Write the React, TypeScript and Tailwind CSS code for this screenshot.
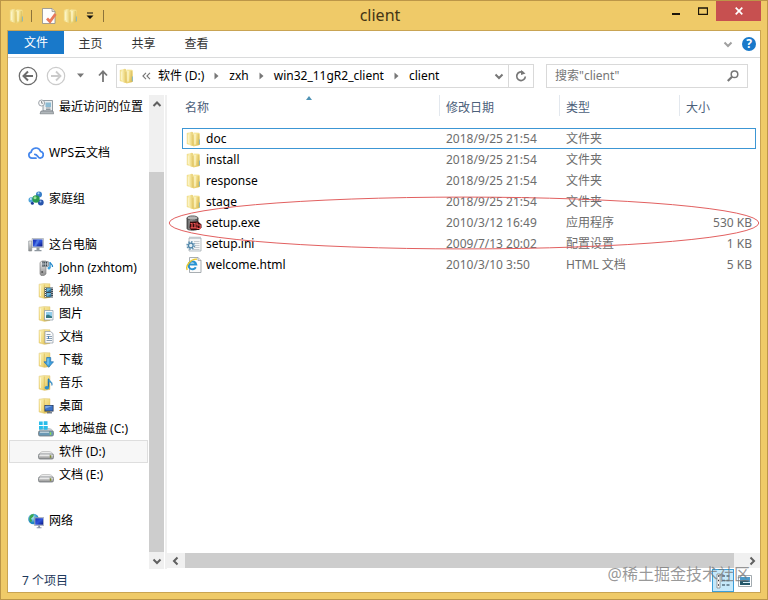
import React from "react";

type IconProps = { className?: string };

function Icon({ children, className = "" }: { children: React.ReactNode; className?: string }) {
  return (
    <svg viewBox="0 0 16 16" aria-hidden="true" className={`h-4 w-4 shrink-0 ${className}`}>
      {children}
    </svg>
  );
}

function Gradients() {
  return (
    <svg width="0" height="0" className="absolute" aria-hidden="true">
      <defs>
        <linearGradient id="folderBack" x1="0" x2="1">
          <stop offset="0" stopColor="#eed882" />
          <stop offset="0.4" stopColor="#f9eeb0" />
          <stop offset="1" stopColor="#e4c763" />
        </linearGradient>
        <linearGradient id="folderFront" x1="0" x2="1" y2="1">
          <stop offset="0" stopColor="#faf0b4" />
          <stop offset="0.5" stopColor="#f1dc84" />
          <stop offset="1" stopColor="#dcbb4e" />
        </linearGradient>
        <linearGradient id="metal" x1="0" x2="0" y2="1">
          <stop offset="0" stopColor="#f2f2f2" />
          <stop offset="1" stopColor="#8c8c8c" />
        </linearGradient>
        <linearGradient id="screen" x1="0" x2="1" y2="1">
          <stop offset="0" stopColor="#1a2fb0" />
          <stop offset="0.5" stopColor="#2f55dc" />
          <stop offset="1" stopColor="#0a1680" />
        </linearGradient>
        <radialGradient id="globe" cx="0.4" cy="0.35">
          <stop offset="0" stopColor="#b8ecf5" />
          <stop offset="1" stopColor="#1c86c4" />
        </radialGradient>
        <linearGradient id="cylinder" x1="0" x2="1">
          <stop offset="0" stopColor="#555" />
          <stop offset="0.4" stopColor="#b9b9b9" />
          <stop offset="1" stopColor="#444" />
        </linearGradient>
      </defs>
    </svg>
  );
}

function FolderIcon({ className }: IconProps) {
  return (
    <Icon className={className}>
      <path d="M.8 2 6 .8l1.200 1v12.400L6 15 .8 13z" fill="url(#folderBack)" />
      <path d="M6.500 2.800 8 1.500l5 .2.800 1v10.600l-1 1L7.500 15.400l-1-.6z" fill="url(#folderFront)" />
      <path d="M7 3.500v11.300" stroke="#d8b850" strokeWidth=".8" />
      <path d="M9 3v10.500" stroke="#fdf7cf" strokeWidth="1.200" />
      <path d="M2.300 3.500v8.500" stroke="#fdf7cf" />
      <path d="M13.400 8.500v4.800" stroke="#78b4c8" strokeWidth=".9" />
      <path d="M12.200 3v11" stroke="#d2b45a" strokeWidth=".7" />
    </Icon>
  );
}

function BaseFolder({ children }: { children: React.ReactNode }) {
  return (
    <Icon>
      <path d="M1 1.200 6 .5l6 .3v13.600l-5.500 1L1 14z" fill="url(#folderFront)" stroke="#d9be68" strokeWidth=".4" />
      <path d="M6.300 1.500v13.500" stroke="#dcbc5a" strokeWidth=".8" />
      <path d="M2.500 2.500v10.500" stroke="#fdf7cf" />
      {children}
    </Icon>
  );
}

const VideoIcon = () => (
  <BaseFolder>
    <path d="M6.500 4.500H15v10H6.500z" fill="#3c4853" />
    <path d="M8.500 5.300h4.600V9H8.500zM8.500 10h4.600v3.700H8.500z" fill="#68b6dc" />
    <path d="M8.500 9 13 6v3zM8.500 13.700 13 11v2.700z" fill="#2e7297" />
    <path d="M7.500 5v9M14.100 5v9" stroke="#eee" strokeDasharray="1 1" />
  </BaseFolder>
);

const PictureIcon = () => (
  <BaseFolder>
    <path d="M6.500 4.500H15v9.500H6.500z" fill="#f7fafc" stroke="#8897a5" strokeWidth=".7" />
    <path d="M8 6h6v6H8z" fill="#91cdec" />
    <path d="M8 12V9.500l2-1 4 2V12z" fill="#347884" />
  </BaseFolder>
);

const DocsIcon = () => (
  <BaseFolder>
    <path d="M7 2.500h5.500L15 4.500V14H7z" fill="#fbfbfb" stroke="#8e99a5" strokeWidth=".7" />
    <path d="M8.500 5.500h4M8.500 7.500H14M8.500 9.500H14M8.500 11.500H14" stroke="#7f96ad" strokeWidth=".9" />
    <path d="M10.500 7v3" stroke="#4781bb" />
  </BaseFolder>
);

const DownloadIcon = () => (
  <BaseFolder>
    <path d="M8.700 5.500h4v4.300h2.800l-4.800 5.500L6 9.800h2.700z" fill="#3ea2df" stroke="#226fae" strokeWidth=".7" />
    <path d="M10 6.500v6" stroke="#9bd8f5" />
  </BaseFolder>
);

const MusicIcon = () => (
  <BaseFolder>
    <path d="M10.500 4v8.300" stroke="#1b6fae" strokeWidth="1.500" />
    <path d="M10.500 3.500c.5 2.700 5 3 3.400 7 .3-2.500-1.500-3.300-3.400-4z" fill="#43a9df" stroke="#1b6fae" strokeWidth=".5" />
    <ellipse cx="8.900" cy="12.700" rx="2.300" ry="1.800" fill="#2d90cd" />
  </BaseFolder>
);

const DesktopIcon = () => (
  <BaseFolder>
    <path d="M6.500 7h9v6.500h-9z" fill="#202c43" />
    <path d="M7.200 7.700h7.600v5H7.200z" fill="#3c72c7" />
    <path d="M7.200 7.700h7.600l-7.600 3z" fill="#7ba8e5" />
    <path d="M9 14.800h5" stroke="#596575" strokeWidth="1.200" />
  </BaseFolder>
);

const RecentIcon = () => (
  <Icon>
    <path d="M5 1.500h9.500V12H5z" fill="#e9edef" stroke="#7c868d" strokeWidth=".8" />
    <path d="M7.500 3.500h5.500V8H7.500z" fill="#8cbbd3" />
    <path d="M8 9h4.500M8 10.500h4.500" stroke="#75818a" strokeWidth=".8" />
    <path d="M3 12h12l.7 2.800H2z" fill="#b0b6ba" stroke="#697177" strokeWidth=".6" />
    <circle cx="3.600" cy="4" r="3" fill="#f8f8f8" stroke="#899198" strokeWidth=".8" />
    <path d="M3.600 2v2.200h1.500" fill="none" stroke="#586167" strokeWidth=".7" />
  </Icon>
);

const CloudIcon = () => (
  <Icon>
    <path d="M8 13.200H3.900a3.100 3.100 0 0 1-.7-6.100 4.800 4.800 0 0 1 9.300-.8 3.500 3.500 0 0 1-.3 6.900c-2.500 0-2.600-3.900-5.400-3.900" fill="none" stroke="#4386ed" strokeWidth="1.700" strokeLinecap="round" />
  </Icon>
);

const HomeGroupIcon = () => (
  <Icon>
    <circle cx="3.300" cy="9" r="2.800" fill="#4fa4da" />
    <circle cx="11" cy="3.400" r="3" fill="#397ec8" />
    <circle cx="12.800" cy="11.500" r="2.900" fill="#2855ac" />
    <circle cx="4.400" cy="12.200" r="1.500" fill="#1d3c96" />
    <circle cx="8" cy="8" r="3.700" fill="#299a4f" />
    <circle cx="7" cy="6.800" r="1.500" fill="#9be297" />
    <circle cx="10.500" cy="2.300" r="1" fill="#a9dcf1" />
    <circle cx="2.800" cy="8" r="1" fill="#c7ecf8" />
    <circle cx="12.500" cy="10.500" r="1" fill="#8fb4ec" />
  </Icon>
);

const ComputerIcon = () => (
  <Icon>
    <path d="M.7 4h3v10h-3z" fill="url(#metal)" stroke="#80868b" strokeWidth=".6" />
    <path d="M4 1.500h11.500v9H4z" fill="#d4d8de" stroke="#8d949c" strokeWidth=".5" />
    <path d="M5 2.500h9.500v7H5z" fill="url(#screen)" />
    <path d="M9 2.500h3l-4 7H6z" fill="#6692ee" opacity=".6" />
    <path d="M8.500 10.500h3V13h2v1.200h-7V13h2z" fill="#8e979f" />
  </Icon>
);

const DeviceIcon = () => (
  <Icon>
    <path d="M2 2.500 4 1h4v13l-2 1.500H3L2 14z" fill="url(#metal)" stroke="#777" strokeWidth=".6" />
    <path d="M4 1.500h6.500v5H4z" fill="#39434a" />
    <path d="M5 2v4M7.300 1.500v5M9.500 2v4M4 4h6" stroke="#dce4e9" strokeWidth=".7" />
    <path d="M12 2v6M12 2c0 2 3 2 2.500 5" fill="none" stroke="#2389cb" strokeWidth="1.300" />
    <circle cx="11" cy="8" r="1.500" fill="#43a5dd" />
    <circle cx="4.200" cy="12" r="1" fill="#555" />
  </Icon>
);

function DriveIcon({ system = false }: { system?: boolean }) {
  return (
    <Icon>
      {system && <path d="M1 .5h3.700V4H1zM5.700.3h3.800V4H5.700zM1 5h3.700v3.500H1zM5.700 5h3.800v3.700H5.700z" fill="#28bce9" />}
      <path d="M.7 10.800C2 8.500 3.500 7.500 5 7.500h6c1.500 0 3.500 1 4.500 3.300z" fill={system ? "#c5d2da" : "#ececec"} stroke="#a0a0a0" strokeWidth=".5" />
      {system && <path d="M1 5h3.700v3.500H1zM5.700 5h3.800v3.700H5.700z" fill="#28bce9" />}
      <rect x=".5" y="10" width="15" height="5" rx="1.500" fill={system ? "#6b99b5" : "url(#metal)"} stroke="#747a7e" strokeWidth=".8" />
      <path d="M2 11.200h9" stroke="#fafafa" strokeWidth=".8" />
      <path d="M12.500 11.300v2.500" stroke={system ? "#8de04b" : "#7f8d2d"} strokeWidth="1.400" />
    </Icon>
  );
}

const NetworkIcon = () => (
  <Icon>
    <circle cx="5.500" cy="6" r="5.300" fill="url(#globe)" />
    <path d="M2 3c1-1.600 2.500-2 4-1.500L5 4 3 5.500l1 2-1 2C1 8 .8 5 2 3z" fill="#3aa750" />
    <path d="M6.500 4.500h9.300v8H6.500z" fill="#d7dce4" stroke="#777f95" strokeWidth=".5" />
    <path d="M7.200 5.200h7.900v6.500H7.200z" fill="url(#screen)" />
    <path d="M10.200 12.500H12v1.800h1.500v1H8.700v-1h1.500z" fill="#8a93a5" />
  </Icon>
);

const SetupIcon = () => (
  <Icon>
    <path d="M1 3v10.500c0 2.300 11 2.300 11 0V3z" fill="url(#cylinder)" stroke="#353535" strokeWidth=".8" />
    <ellipse cx="6.500" cy="3" rx="5.500" ry="2.100" fill="#b5b5b5" stroke="#404040" strokeWidth=".8" />
    <path d="M4 6.500h8l3.500 3v3L13 15H5l-1.500-2z" fill="#330b0b" />
    <path d="M4.500 8.500H6v4M7.500 8.500H9v4M4.500 12.800h5.500M11 7.500V10h3.200v3.500H11V11.500" fill="none" stroke="#ee5555" strokeWidth="1.200" />
  </Icon>
);

const IniIcon = () => (
  <Icon>
    <path d="M3 2h12v13H3z" fill="#f5f7f8" stroke="#a5adb2" strokeWidth=".8" />
    <path d="M4 .5v2M6 .5v2M8 .5v2M10 .5v2M12 .5v2M14 .5v2" stroke="#9ba5ac" strokeWidth=".7" />
    <path d="M8 5.500h5.500M9 7.500h4.500M9 9.500h4.500M8 11.500h5.500M7 13.500h6.500" stroke="#c4cacf" />
    <circle cx="4.800" cy="9.500" r="3.600" fill="none" stroke="#6796b4" strokeWidth="1.800" strokeDasharray="1.500 1.300" />
    <circle cx="4.800" cy="9.500" r="2.300" fill="#e4f0f6" stroke="#4c83a8" strokeWidth="1.200" />
  </Icon>
);

const HtmlIcon = () => (
  <Icon>
    <path d="M3.500.5H12l3 3v12H3.500z" fill="#fbfbfb" stroke="#92999e" strokeWidth=".8" />
    <path d="M12 .5v3h3" fill="#e1e4e6" stroke="#92999e" strokeWidth=".7" />
    <path d="M9.800 10.300a3.900 3.900 0 1 1 .4-2.900H3.300" fill="none" stroke="#2491d2" strokeWidth="2" />
    <path d="M1.300 12.800C-1 9 5 1.500 11 2.200" fill="none" stroke="#e9c82c" strokeWidth="1.400" />
  </Icon>
);

function Chevron({ dir, className = "" }: { dir: "up" | "down" | "left" | "right"; className?: string }) {
  const d = { up: "M1.500 7 5 3.500 8.500 7", down: "M1.500 3.500 5 7l3.500-3.500", left: "M6.500 1.500 3 5l3.500 3.500", right: "M3.500 1.500 7 5 3.500 8.500" }[dir];
  return (
    <svg viewBox="0 0 10 10" aria-hidden="true" className={`h-[10px] w-[10px] shrink-0 ${className}`}>
      <path d={d} fill="none" stroke="currentColor" strokeWidth="2" />
    </svg>
  );
}

function TitleBar() {
  return (
    <header className="flex h-[29px] shrink-0 items-start">
      <div className="flex h-full w-[120px] items-center pl-2">
        <FolderIcon />
        <span className="ml-[6px] h-3 w-px bg-[#8d733a]" />
        <button aria-label="属性" className="ml-[9px]">
          <Icon>
            <path d="M1.500.5H11l3 3v12H1.500z" fill="#fdfdfd" stroke="#8c8c8c" strokeWidth=".8" />
            <path d="M11 .5v3h3" fill="#ddd" stroke="#8c8c8c" strokeWidth=".7" />
            <path d="m6 10.500 3 3L14.500 6" fill="none" stroke="#e8785a" strokeWidth="2.800" />
          </Icon>
        </button>
        <button aria-label="新建文件夹" className="ml-[6px]"><FolderIcon /></button>
        <button aria-label="自定义快速访问工具栏" className="ml-[7px]">
          <svg viewBox="0 0 8 8" className="h-2 w-2"><path d="M1 .5h6v1H1zM.5 3.500h7L4 7z" fill="#111" /></svg>
        </button>
        <span className="ml-[9px] h-3 w-px bg-[#8d733a]" />
      </div>
      <h1 className="flex-1 text-center text-base leading-[28px] text-[#443515]">client</h1>
      <div className="flex w-[128px] justify-end pr-[6px]">
        <button aria-label="最小化" className="flex h-5 w-7 items-center justify-center">
          <svg viewBox="0 0 10 10" className="h-[10px] w-[10px]"><path d="M1 8h8" stroke="#1c160a" strokeWidth="2" /></svg>
        </button>
        <button aria-label="最大化" className="flex h-5 w-[26px] items-center justify-center">
          <svg viewBox="0 0 10 8" className="h-2 w-[10px]"><path d="M0 1h10M.5 1v7M9.500 1v7M0 7.500h10" fill="none" stroke="#1c160a" strokeWidth="1.300" /></svg>
        </button>
        <button aria-label="关闭" className="flex h-5 w-[45px] items-center justify-center bg-[#c75050]">
          <svg viewBox="0 0 8 8" className="h-2 w-2"><path d="m.7.7 6.600 6.600M7.300.7.7 7.300" stroke="#fff" strokeWidth="1.700" /></svg>
        </button>
      </div>
    </header>
  );
}

function Ribbon() {
  return (
    <div className="flex h-[27px] shrink-0 items-start border-b border-[#dadbdc] text-[#333]">
      <button className="h-[23px] w-14 bg-[#1979ca] text-white">文件</button>
      {["主页", "共享", "查看"].map((t) => (
        <button key={t} className="h-[26px] w-[53px]">{t}</button>
      ))}
      <div className="flex h-[26px] flex-1 items-center justify-end gap-[9px] pr-1">
        <button aria-label="展开功能区"><Chevron dir="down" className="text-[#a0a0a0]" /></button>
        <button aria-label="帮助" className="flex h-[14px] w-[14px] items-center justify-center rounded-full bg-[#1979ca] text-xs font-bold text-white">?</button>
      </div>
    </div>
  );
}

function Arrow() {
  return (
    <svg viewBox="0 0 5 8" aria-hidden="true" className="mx-[10px] h-2 w-[5px] shrink-0"><path d="M.5.5v7l4-3.500z" fill="#777" /></svg>
  );
}

function AddressRow() {
  return (
    <div className="flex h-[37px] shrink-0 items-center pb-[2px] pl-[10px] pr-3">
      <button aria-label="后退">
        <svg viewBox="0 0 20 20" className="h-5 w-5" fill="none" stroke="#6c6c6c"><circle cx="10" cy="10" r="8.700" strokeWidth="1.300" /><path d="M15 10H6M10 5.500 5.500 10l4.500 4.500" strokeWidth="2" /></svg>
      </button>
      <button aria-label="前进" className="ml-2">
        <svg viewBox="0 0 20 20" className="h-5 w-5" fill="none" stroke="#cbcbcb"><circle cx="10" cy="10" r="8.700" strokeWidth="1.200" /><path d="M5 10h9M10 5.500l4.500 4.500-4.500 4.500" strokeWidth="1.800" /></svg>
      </button>
      <button aria-label="最近浏览的位置" className="ml-[11px]">
        <svg viewBox="0 0 7 5" className="h-[5px] w-[7px]"><path d="M0 .5h7l-3.500 4z" fill="#777" /></svg>
      </button>
      <button aria-label="上移" className="ml-[13px] mr-[7px]">
        <svg viewBox="0 0 12 14" className="h-[14px] w-3"><path d="M6 13V2M2 6.500 6 2.300l4 4.200" fill="none" stroke="#777" strokeWidth="1.800" /></svg>
      </button>
      <nav aria-label="地址" className="flex h-6 min-w-0 flex-1 items-center border border-[#d9d9d9] pl-[2px] text-black">
        <FolderIcon />
        <svg viewBox="0 0 9 8" aria-hidden="true" className="mx-[7px] h-2 w-[9px] shrink-0"><path d="M4 .8.9 4 4 7.200M8 .8 4.900 4 8 7.200" fill="none" stroke="#777" strokeWidth="1.100" /></svg>
        <button className="whitespace-nowrap">软件 (D:)</button>
        <Arrow />
        <button>zxh</button>
        <Arrow />
        <button>win32_11gR2_client</button>
        <Arrow />
        <button>client</button>
        <span className="flex-1" />
        <button aria-label="以前的位置" className="mr-1"><Chevron dir="down" className="text-[#777]" /></button>
        <button aria-label="刷新" className="flex h-full w-[25px] items-center justify-center border-l border-[#d9d9d9]">
          <svg viewBox="0 0 12 12" className="h-3 w-3"><path d="M8.300 2.600A4.300 4.300 0 1 0 10.300 6.500" fill="none" stroke="#777" strokeWidth="1.700" /><path d="M6 0v5l4.500-1.500z" fill="#777" /></svg>
        </button>
      </nav>
      <form role="search" className="ml-3 flex h-6 w-[202px] items-center border border-[#d9d9d9] px-2" onSubmit={(e) => e.preventDefault()}>
        <input aria-label="搜索" placeholder={'搜索"client"'} className="h-full min-w-0 flex-1 bg-transparent outline-none placeholder:text-[#767676] placeholder:opacity-100" />
        <button aria-label="开始搜索">
          <svg viewBox="0 0 12 12" className="h-3 w-3" fill="none" stroke="#777"><circle cx="7.500" cy="4.300" r="3.300" strokeWidth="1.500" /><path d="M5 6.700.8 11" strokeWidth="2.200" /></svg>
        </button>
      </form>
    </div>
  );
}

type Place = { label: string; icon: React.ReactNode; child?: boolean; selected?: boolean };

const groups: Place[][] = [
  [{ label: "最近访问的位置", icon: <RecentIcon />, child: true }],
  [{ label: "WPS云文档", icon: <CloudIcon /> }],
  [{ label: "家庭组", icon: <HomeGroupIcon /> }],
  [
    { label: "这台电脑", icon: <ComputerIcon /> },
    { label: "John (zxhtom)", icon: <DeviceIcon />, child: true },
    { label: "视频", icon: <VideoIcon />, child: true },
    { label: "图片", icon: <PictureIcon />, child: true },
    { label: "文档", icon: <DocsIcon />, child: true },
    { label: "下载", icon: <DownloadIcon />, child: true },
    { label: "音乐", icon: <MusicIcon />, child: true },
    { label: "桌面", icon: <DesktopIcon />, child: true },
    { label: "本地磁盘 (C:)", icon: <DriveIcon system />, child: true },
    { label: "软件 (D:)", icon: <DriveIcon />, child: true, selected: true },
    { label: "文档 (E:)", icon: <DriveIcon />, child: true },
  ],
  [{ label: "网络", icon: <NetworkIcon /> }],
];

function Sidebar() {
  return (
    <aside className="flex shrink-0 border-r-2 border-[#f0f0f0]">
      <nav aria-label="导航窗格" className="flex w-[141px] flex-col gap-[23px] overflow-hidden px-px text-black">
        {groups.map((group, i) => (
          <ul key={i}>
            {group.map((p) => (
              <li key={p.label}>
                <button
                  className={`flex h-[23px] w-full items-center gap-[5px] border whitespace-nowrap ${p.child ? "pl-7" : "pl-[18px]"} ${p.selected ? "border-[#dedede] bg-[#f7f7f7]" : "border-transparent"}`}
                >
                  {p.icon}
                  {p.label}
                </button>
              </li>
            ))}
          </ul>
        ))}
      </nav>
      <div className="mr-px flex w-[15px] flex-col bg-[#f0f0f0] text-[#606060]">
        <button aria-label="向上滚动" className="flex h-[17px] items-center justify-center"><Chevron dir="up" /></button>
        <div className="h-[60px]" />
        <div className="flex-1 bg-[#cdcdcd]" />
        <button aria-label="向下滚动" className="flex h-[17px] items-center justify-center"><Chevron dir="down" /></button>
      </div>
    </aside>
  );
}

const files = [
  { name: "doc", icon: <FolderIcon />, date: "2018/9/25 21:54", type: "文件夹", size: "" },
  { name: "install", icon: <FolderIcon />, date: "2018/9/25 21:54", type: "文件夹", size: "" },
  { name: "response", icon: <FolderIcon />, date: "2018/9/25 21:54", type: "文件夹", size: "" },
  { name: "stage", icon: <FolderIcon />, date: "2018/9/25 21:54", type: "文件夹", size: "" },
  { name: "setup.exe", icon: <SetupIcon />, date: "2010/3/12 16:49", type: "应用程序", size: "530 KB" },
  { name: "setup.ini", icon: <IniIcon />, date: "2009/7/13 20:02", type: "配置设置", size: "1 KB" },
  { name: "welcome.html", icon: <HtmlIcon />, date: "2010/3/10 3:50", type: "HTML 文档", size: "5 KB" },
];

function FileTable() {
  return (
    <table className="w-full table-fixed border-separate border-spacing-0 text-[#6d6d6d]">
      <thead className="text-left text-[#4c607a]">
        <tr className="h-[33px] align-top">
          <th className="p-0 font-normal">
            <div className="relative h-[21px] pl-[3px] pt-1 leading-[18px]">
              名称
              <svg viewBox="0 0 6 4" aria-hidden="true" className="absolute left-[124px] top-px h-1 w-[6px]"><path d="M0 4h6L3 0z" fill="#4f93b5" /></svg>
            </div>
          </th>
          <th className="w-[120px] p-0 font-normal"><div className="h-[21px] border-l border-[#e3e8ee] pl-[6px] pt-1 leading-[18px]">修改日期</div></th>
          <th className="w-[120px] p-0 font-normal"><div className="h-[21px] border-l border-[#e3e8ee] pl-[6px] pt-1 leading-[18px]">类型</div></th>
          <th className="w-[77px] p-0 font-normal"><div className="h-[21px] border-l border-[#e3e8ee] pl-[6px] pt-1 leading-[18px]">大小</div></th>
        </tr>
      </thead>
      <tbody>
        {files.map((f, i) => (
          <tr key={f.name} className={i === 0 ? "h-[21px] outline outline-1 -outline-offset-1 outline-[#3c96d4]" : "h-[21px]"}>
            <td className="p-0 pl-1"><div className="flex items-center gap-1 text-black">{f.icon}{f.name}</div></td>
            <td className="p-0 pl-[7px]">{f.date}</td>
            <td className="p-0 pl-[7px]">{f.type}</td>
            <td className="p-0 pr-1 text-right">{f.size}</td>
          </tr>
        ))}
      </tbody>
    </table>
  );
}

function StatusBar() {
  return (
    <footer className="relative flex h-[23px] shrink-0 items-center pl-[14px] text-[#1e395b]">
      <span className="flex-1">7 个项目</span>
      <button aria-label="详细信息" className="flex h-[23px] w-[22px] items-center justify-center border border-[#3c9fd8] bg-[#c5e8fa]">
        <Icon>
          <path d="M2 1h3v14H2z" fill="#fff" stroke="#777" strokeWidth=".7" />
          <path d="M3 3h1M3 7.500h1M3 12h1" stroke="#333" strokeWidth="1.500" />
          <path d="M7 3h3M11.500 3h3M7 7.500h3M11.500 7.500h3M7 12h3M11.500 12h3" stroke="#567082" strokeWidth="1.300" />
        </Icon>
      </button>
      <button aria-label="大缩略图" className="ml-[3px] mr-[7px]">
        <Icon>
          <path d="M1.500 2.500h13v11h-13z" fill="#fff" stroke="#8b959c" strokeWidth=".8" />
          <path d="M3 4h10v8H3z" fill="#4b9ac9" />
          <path d="M3 12V8l5-1 5 2v3z" fill="#24586a" />
          <path d="M6 9.500h7" stroke="#d7eef8" />
        </Icon>
      </button>
      <span className="pointer-events-none absolute right-[10px] bottom-[6px] whitespace-nowrap text-base leading-6 text-[#777]/75">@稀土掘金技术社区</span>
    </footer>
  );
}

export default function App() {
  return (
    <div className="flex h-screen w-full flex-col border border-[#bc9648] bg-[#efca68] font-['Noto_Sans','Noto_Sans_CJK_SC',sans-serif] text-xs">
      <Gradients />
      <TitleBar />
      <div className="mx-[6px] mb-[6px] flex min-h-0 flex-1 flex-col border border-[#c9a453] bg-white">
        <Ribbon />
        <AddressRow />
        <div className="flex min-h-0 flex-1">
          <Sidebar />
          <main className="relative flex min-w-0 flex-1 flex-col">
            <div className="min-h-0 flex-1 overflow-hidden pl-[15px] pr-1">
              <FileTable />
            </div>
            <svg aria-hidden="true" className="pointer-events-none absolute left-px top-[101px] h-[54px] w-[calc(100%-1px)]">
              <ellipse cx="50%" cy="50%" rx="49.8%" ry="48%" fill="none" stroke="#e26060" strokeWidth="1" />
            </svg>
            <div className="mb-px flex h-[15px] shrink-0 bg-[#f0f0f0] text-[#606060]">
              <button aria-label="向左滚动" className="flex w-[18px] items-center justify-center"><Chevron dir="left" /></button>
              <div className="flex-1 bg-[#cdcdcd]" />
              <button aria-label="向右滚动" className="ml-[9px] flex w-[17px] items-center justify-center"><Chevron dir="right" /></button>
            </div>
          </main>
        </div>
        <StatusBar />
      </div>
    </div>
  );
}
